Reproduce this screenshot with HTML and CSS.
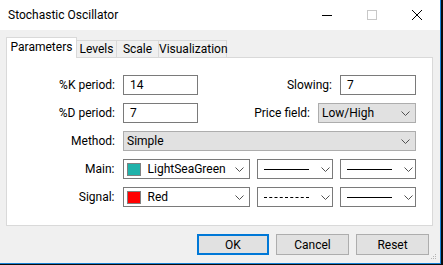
FILE: index.html
```html
<!DOCTYPE html>
<html lang="en">
<head>
    <meta charset="UTF-8">
    <title>Stochastic Oscillator</title>
    <link rel="stylesheet" href="styles.css">
</head>
<body>

    <div class="window">
        <!-- Barre de titre -->
        <div class="titlebar">
            <span class="title">Stochastic Oscillator</span>
            <div class="caption-btns">
                <div class="caption-btn">
                    <svg width="10" height="10" viewBox="0 0 10 10"><line x1="0" y1="5.5" x2="10" y2="5.5" stroke="#000" stroke-width="1"/></svg>
                </div>
                <div class="caption-btn">
                    <svg width="10" height="10" viewBox="0 0 10 10"><rect x="0.5" y="0.5" width="9" height="9" fill="none" stroke="#c8c8c8" stroke-width="1"/></svg>
                </div>
                <div class="caption-btn">
                    <svg width="10" height="10" viewBox="0 0 10 10"><path d="M0 0 L10 10 M10 0 L0 10" stroke="#000" stroke-width="1"/></svg>
                </div>
            </div>
        </div>

        <div class="content">
            <!-- Onglets -->
            <div class="tabs">
                <div class="tab tab-active">Parameters</div>
                <div class="tab tab-levels">Levels</div>
                <div class="tab tab-scale">Scale</div>
                <div class="tab tab-visu">Visualization</div>
            </div>

            <div class="panel">
                <div class="row">
                    <label class="lbl">%K period:</label>
                    <div class="field w-short">14</div>
                    <div class="right-group">
                        <label class="lbl-r">Slowing:</label>
                        <div class="field w-style">7</div>
                    </div>
                </div>

                <div class="row">
                    <label class="lbl">%D period:</label>
                    <div class="field w-short">7</div>
                    <div class="right-group">
                        <label class="lbl-r">Price field:</label>
                        <div class="combo w-price">
                            <span class="combo-text">Low/High</span>
                            <svg class="chev" width="9" height="5" viewBox="0 0 9 5"><polyline points="0.5,0.5 4.5,4.5 8.5,0.5" fill="none" stroke="#505050" stroke-width="1"/></svg>
                        </div>
                    </div>
                </div>

                <div class="row">
                    <label class="lbl">Method:</label>
                    <div class="combo w-method">
                        <span class="combo-text">Simple</span>
                        <svg class="chev" width="9" height="5" viewBox="0 0 9 5"><polyline points="0.5,0.5 4.5,4.5 8.5,0.5" fill="none" stroke="#505050" stroke-width="1"/></svg>
                    </div>
                </div>

                <div class="row">
                    <label class="lbl">Main:</label>
                    <div class="drop w-color">
                        <span class="swatch" style="background-color: #20b2aa;"></span>
                        <span class="combo-text">LightSeaGreen</span>
                        <svg class="chev" width="9" height="5" viewBox="0 0 9 5"><polyline points="0.5,0.5 4.5,4.5 8.5,0.5" fill="none" stroke="#505050" stroke-width="1"/></svg>
                    </div>
                    <div class="drop w-style">
                        <span class="line line-solid"></span>
                        <svg class="chev" width="9" height="5" viewBox="0 0 9 5"><polyline points="0.5,0.5 4.5,4.5 8.5,0.5" fill="none" stroke="#505050" stroke-width="1"/></svg>
                    </div>
                    <div class="drop w-style">
                        <span class="line line-solid"></span>
                        <svg class="chev" width="9" height="5" viewBox="0 0 9 5"><polyline points="0.5,0.5 4.5,4.5 8.5,0.5" fill="none" stroke="#505050" stroke-width="1"/></svg>
                    </div>
                </div>

                <div class="row">
                    <label class="lbl">Signal:</label>
                    <div class="drop w-color">
                        <span class="swatch" style="background-color: #ff0000;"></span>
                        <span class="combo-text">Red</span>
                        <svg class="chev" width="9" height="5" viewBox="0 0 9 5"><polyline points="0.5,0.5 4.5,4.5 8.5,0.5" fill="none" stroke="#505050" stroke-width="1"/></svg>
                    </div>
                    <div class="drop w-style">
                        <span class="line line-dash"></span>
                        <svg class="chev" width="9" height="5" viewBox="0 0 9 5"><polyline points="0.5,0.5 4.5,4.5 8.5,0.5" fill="none" stroke="#505050" stroke-width="1"/></svg>
                    </div>
                    <div class="drop w-style">
                        <span class="line line-solid"></span>
                        <svg class="chev" width="9" height="5" viewBox="0 0 9 5"><polyline points="0.5,0.5 4.5,4.5 8.5,0.5" fill="none" stroke="#505050" stroke-width="1"/></svg>
                    </div>
                </div>
            </div>

            <!-- Boutons -->
            <div class="buttons">
                <button class="btn btn-default">OK</button>
                <button class="btn">Cancel</button>
                <button class="btn">Reset</button>
            </div>
        </div>

        <svg class="grip" width="7" height="7" viewBox="0 0 7 7">
            <rect x="5" y="0" width="1" height="1" fill="#b4b4b4"/>
            <rect x="3" y="2" width="1" height="1" fill="#b4b4b4"/>
            <rect x="5" y="2" width="1" height="1" fill="#b4b4b4"/>
            <rect x="1" y="4" width="1" height="1" fill="#b4b4b4"/>
            <rect x="3" y="4" width="1" height="1" fill="#b4b4b4"/>
            <rect x="5" y="4" width="1" height="1" fill="#b4b4b4"/>
        </svg>
    </div>

</body>
</html>
```

FILE: styles.css
```css
body {
    margin: 0;
    background-color: #0c0c0c;
    font-family: Roboto, "Noto Sans", sans-serif;
    font-size: 12px;
    color: #000;
}

.window {
    position: relative;
    width: 440px;
    height: 263px;
    background-color: #f0f0f0;
    border-right: 1px solid #1883d7;
    border-bottom: 1px solid #1883d7;
}

.titlebar {
    height: 30px;
    background-color: #fff;
    display: flex;
    align-items: center;
}

.title {
    padding-left: 8px;
    flex: 1;
    font-size: 12px;
}

.caption-btns {
    display: flex;
    margin-right: 1px;
}

.caption-btn {
    width: 45px;
    height: 30px;
    display: flex;
    align-items: center;
    justify-content: center;
}

.content {
    display: flex;
    flex-direction: column;
}

.tabs {
    display: flex;
    align-items: flex-end;
    margin-top: 7px;
    margin-left: 6px;
    height: 20px;
}

.tab {
    height: 16px;
    line-height: 16px;
    text-align: center;
    border-top: 1px solid #d9d9d9;
    border-right: 1px solid #d9d9d9;
    box-sizing: content-box;
    white-space: nowrap;
}

.tab-active {
    width: 69px;
    height: 20px;
    line-height: 19px;
    border-left: 1px solid #d9d9d9;
    background-color: #fff;
    margin-bottom: -1px;
    position: relative;
    z-index: 1;
}

.tab-levels { width: 39px; }
.tab-scale { width: 41px; }
.tab-visu { width: 67px; }

.panel {
    margin-left: 6px;
    width: 425px;
    height: 150px;
    background-color: #fff;
    border: 1px solid #d9d9d9;
    padding-top: 17px;
    box-sizing: content-box;
    display: flex;
    flex-direction: column;
    gap: 8px;
}

.row {
    display: flex;
    align-items: center;
    height: 20px;
    flex: none;
    padding-right: 16px;
}

.lbl {
    width: 108px;
    text-align: right;
    margin-right: 8px;
}

.right-group {
    margin-left: auto;
    display: flex;
    align-items: center;
}

.lbl-r {
    margin-right: 8px;
}

.field {
    height: 20px;
    box-sizing: border-box;
    border: 1px solid #7a7a7a;
    background-color: #fff;
    padding-left: 6px;
    line-height: 18px;
}

.combo, .drop {
    height: 20px;
    box-sizing: border-box;
    display: flex;
    align-items: center;
    padding-left: 3px;
    padding-right: 5px;
}

.combo {
    background-color: #e1e1e1;
    border: 1px solid #adadad;
}

.drop {
    background-color: #fff;
    border: 1px solid #7a7a7a;
    margin-right: 7px;
}

.drop:last-child {
    margin-right: 0;
}

.combo-text {
    flex: 1;
}

.chev {
    flex: none;
}

.w-short { width: 75px; }
.w-style { width: 76px; }
.w-price { width: 98px; }
.w-method { width: 293px; }
.w-color { width: 128px; }

.swatch {
    width: 12px;
    height: 11px;
    border: 1px solid #808080;
    margin-right: 7px;
    flex: none;
}

.line {
    flex: none;
    width: 45px;
    margin-left: 3px;
    margin-right: 12px;
    height: 0;
}

.line-solid {
    border-top: 1px solid #000;
}

.line-dash {
    border-top: 1px dashed #000;
}

.buttons {
    display: flex;
    justify-content: flex-end;
    gap: 7px;
    margin-top: 8px;
    padding-right: 11px;
}

.btn {
    width: 73px;
    height: 21px;
    background-color: #e1e1e1;
    border: 1px solid #adadad;
    font-family: Roboto, "Noto Sans", sans-serif;
    font-size: 12px;
    color: #000;
    padding: 0;
}

.btn-default {
    width: 72px;
    border: 2px solid #0078d7;
}

.grip {
    position: absolute;
    right: 3px;
    bottom: 2px;
}
```
